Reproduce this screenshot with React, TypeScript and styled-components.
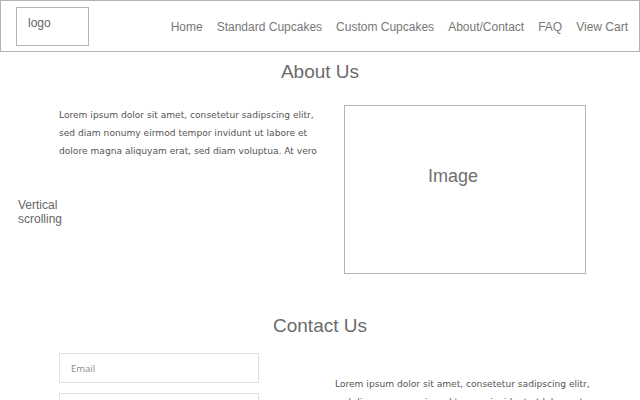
import styled, { createGlobalStyle } from "styled-components";

const GlobalStyle = createGlobalStyle`
  html, body {
    margin: 0;
    padding: 0;
    background: #ffffff;
  }
  body {
    font-family: "Liberation Sans", Arial, sans-serif;
    overflow: hidden;
  }
`;

const Page = styled.div`
  position: relative;
  width: 640px;
  height: 400px;
  overflow: hidden;
  color: #666666;
`;

const Header = styled.header`
  display: flex;
  justify-content: space-between;
  align-items: flex-start;
  box-sizing: border-box;
  height: 52px;
  padding: 6px 11px 0 15px;
  border: 1px solid #b4b4b4;
`;

const Logo = styled.div`
  box-sizing: border-box;
  width: 73px;
  height: 39px;
  padding: 8px 0 0 11px;
  border: 1px solid #b4b4b4;
  font-size: 12px;
  color: #666666;
`;

const Nav = styled.nav`
  display: flex;
  gap: 14px;
  padding-top: 13px;
`;

const NavLink = styled.a`
  font-size: 12px;
  color: #777777;
  text-decoration: none;
  white-space: nowrap;
`;

const Heading = styled.h2`
  margin: 0;
  text-align: center;
  font-size: 19px;
  font-weight: 400;
  color: #6b6b6b;
  line-height: 22px;
`;

const AboutSection = styled.section`
  padding-top: 9px;
`;

const AboutRow = styled.div`
  display: grid;
  grid-template-columns: 285px 242px;
  padding-left: 59px;
  margin-top: 22px;
  align-items: start;
`;

const Body = styled.p`
  margin: 0;
  font-family: "DejaVu Sans", "Open Sans", sans-serif;
  font-size: 9.1px;
  line-height: 18px;
  color: #555555;
  width: 268px;
  padding-top: 1px;
`;

const ImageBox = styled.div`
  box-sizing: border-box;
  width: 242px;
  height: 169px;
  border: 1px solid #b4b4b4;
  display: flex;
  justify-content: center;
  align-items: center;
  font-size: 18px;
  color: #6f6f6f;
  padding: 0 24px 26px 0;
`;

const Annotation = styled.div`
  position: absolute;
  left: 18px;
  top: 198px;
  font-size: 12px;
  line-height: 14px;
  color: #666666;
`;

const ContactSection = styled.section`
  padding-top: 41px;
`;

const ContactRow = styled.div`
  display: grid;
  grid-template-columns: 276px 1fr;
  padding-left: 59px;
  margin-top: 16px;
`;

const Form = styled.div`
  display: flex;
  flex-direction: column;
  gap: 10px;
`;

const Input = styled.input`
  box-sizing: border-box;
  width: 200px;
  height: 30px;
  border: 1px solid #e2e2e2;
  padding: 0 11px;
  font-family: "Open Sans", sans-serif;
  font-size: 9.5px;
  color: #555555;
  outline: none;
  &::placeholder {
    color: #8a8a8a;
  }
`;

const ContactText = styled(Body)`
  padding-top: 22px;
`;

const navItems = ["Home", "Standard Cupcakes", "Custom Cupcakes", "About/Contact", "FAQ", "View Cart"];

const lorem =
  "Lorem ipsum dolor sit amet, consetetur sadipscing elitr, sed diam nonumy eirmod tempor invidunt ut labore et dolore magna aliquyam erat, sed diam voluptua. At vero";

export default function App() {
  return (
    <>
      <GlobalStyle />
      <Page>
        <Header>
          <Logo>logo</Logo>
          <Nav>
            {navItems.map((item) => (
              <NavLink key={item} href="#">{item}</NavLink>
            ))}
          </Nav>
        </Header>

        <AboutSection>
          <Heading>About Us</Heading>
          <AboutRow>
            <Body>{lorem}</Body>
            <ImageBox>Image</ImageBox>
          </AboutRow>
        </AboutSection>

        <Annotation>
          Vertical
          <br />
          scrolling
        </Annotation>

        <ContactSection>
          <Heading>Contact Us</Heading>
          <ContactRow>
            <Form>
              <Input placeholder="Email" />
              <Input />
            </Form>
            <ContactText>{lorem}</ContactText>
          </ContactRow>
        </ContactSection>
      </Page>
    </>
  );
}
